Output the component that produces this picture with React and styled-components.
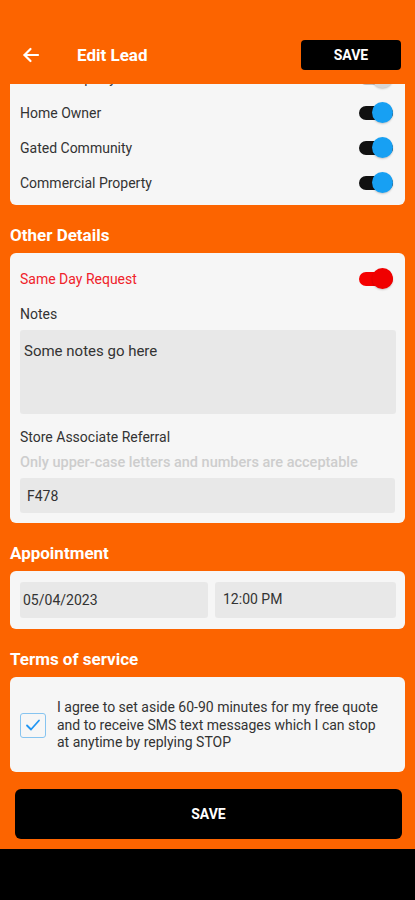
import React, {useRef, useLayoutEffect} from 'react';
import styled, {createGlobalStyle} from 'styled-components';

const GlobalStyle = createGlobalStyle`
  html, body {
    margin: 0;
    padding: 0;
    background: #000;
  }
  * {
    box-sizing: border-box;
  }
  body {
    font-family: Roboto, "Liberation Sans", Arial, sans-serif;
  }
`;

const Screen = styled.div`
  width: 415px;
  height: 900px;
  display: flex;
  flex-direction: column;
  background: #fc6400;
  overflow: hidden;
`;

const Header = styled.header`
  height: 84px;
  flex-shrink: 0;
  display: flex;
  align-items: center;
  padding: 25px 14px 0 20px;
  background: #fc6400;
`;

const BackButton = styled.button`
  width: 22px;
  height: 22px;
  padding: 0;
  border: none;
  background: none;
  display: flex;
  align-items: center;
  justify-content: center;
  cursor: pointer;
`;

const Title = styled.h1`
  margin: 0 0 0 35px;
  flex: 1;
  color: #fff;
  font-size: 17px;
  font-weight: 700;
`;

const SaveSmall = styled.button`
  width: 100px;
  height: 30px;
  border: none;
  border-radius: 4px;
  background: #000;
  color: #fff;
  font-family: Roboto, "Liberation Sans", sans-serif;
  font-size: 14px;
  font-weight: 700;
  cursor: pointer;
`;

const Scroll = styled.main`
  flex: 1;
  overflow: hidden;
  padding: 0 10px 10px;
`;

const Card = styled.section`
  background: #f6f6f6;
  border-radius: 6px;
  padding: ${p => p.$pad || '10px'};
  display: flex;
  flex-direction: column;
`;

const SectionTitle = styled.h2`
  margin: 20px 0 8px;
  height: 20px;
  line-height: 20px;
  color: #fff;
  font-size: 17px;
  font-weight: 700;
`;

const ToggleRow = styled.div`
  height: ${p => p.$h ?? 35}px;
  display: flex;
  align-items: center;
  justify-content: space-between;
  padding: 0 ${p => p.$right ?? 12}px 0 ${p => p.$left ?? 10}px;
`;

const RowLabel = styled.span`
  font-size: 14px;
  color: ${p => p.$color || '#333'};
`;

const Track = styled.span`
  position: relative;
  display: inline-block;
  width: 34px;
  height: 14px;
  border-radius: 7px;
  background: ${p => p.$track};
`;

const Thumb = styled.span`
  position: absolute;
  right: 0;
  top: -4px;
  width: 21px;
  height: 21px;
  border-radius: 50%;
  background: ${p => p.$thumb};
  box-shadow: 0 1px 2px rgba(0, 0, 0, 0.2);
`;

const FieldLabel = styled.div`
  margin-top: ${p => p.$mt || 0}px;
  line-height: 20px;
  font-size: 14px;
  color: #333;
`;

const Hint = styled.div`
  margin-top: 6px;
  line-height: 20px;
  font-size: 14.5px;
  font-weight: 500;
  color: #cdcdcd;
  white-space: nowrap;
`;

const TextArea = styled.div`
  margin-top: 6px;
  height: 84px;
  margin-right: -1px;
  border-radius: 3px;
  background: #e8e8e8;
  padding: 12px 4px;
  font-size: 15px;
  color: #333;
`;

const Input = styled.div`
  margin-top: ${p => p.$mt || 0}px;
  height: ${p => p.$h || 35}px;
  width: ${p => p.$w ? `${p.$w}px` : 'auto'};
  flex: ${p => p.$w ? 'none' : '1 1 auto'};
  border-radius: 3px;
  background: #e8e8e8;
  display: flex;
  align-items: ${p => p.$top ? 'flex-start' : 'center'};
  padding: ${p => p.$top ? '9px 0 0' : '0'};
  padding-left: ${p => p.$px ?? 7}px;
  font-size: 14px;
  color: #333;
`;

const InputRow = styled.div`
  display: flex;
  gap: 7px;
`;

const TermsRow = styled.label`
  display: flex;
  align-items: center;
  gap: 11px;
`;

const CheckBox = styled.span`
  flex-shrink: 0;
  width: 26px;
  height: 25px;
  border: 1.5px solid #86c4f0;
  border-radius: 3px;
  display: flex;
  align-items: center;
  justify-content: center;
`;

const TermsText = styled.p`
  margin: 0;
  font-size: 14px;
  line-height: 17.5px;
  color: #333;
`;

const SaveBig = styled.button`
  display: block;
  width: calc(100% - 8px);
  margin: 17px 4px 0 5px;
  height: 50px;
  border: none;
  border-radius: 6px;
  background: #000;
  color: #fff;
  font-family: Roboto, "Liberation Sans", sans-serif;
  font-size: 14px;
  font-weight: 700;
  cursor: pointer;
`;

const NavBar = styled.div`
  height: 51px;
  flex-shrink: 0;
  background: #000;
`;

const Switch = ({track, thumb}) => (
  <Track $track={track}>
    <Thumb $thumb={thumb} />
  </Track>
);

// first row sits mostly under the header (list is scrolled)
const propertyToggles = [
  {label: 'Rental Property', on: false},
  {label: 'Home Owner', on: true},
  {label: 'Gated Community', on: true},
  {label: 'Commercial Property', on: true},
];

export default function App() {
  const scrollRef = useRef(null);

  useLayoutEffect(() => {
    if (scrollRef.current) scrollRef.current.scrollTop = 32;
  }, []);

  return (
    <>
      <GlobalStyle />
      <Screen>
        <Header>
          <BackButton aria-label="Back">
            <svg width="18" height="18" viewBox="0 0 18 18" fill="none" stroke="#fff" strokeWidth="2.2" strokeLinecap="round" strokeLinejoin="round">
              <path d="M16 9H2.5" />
              <path d="M8.5 3L2.5 9l6 6" />
            </svg>
          </BackButton>
          <Title>Edit Lead</Title>
          <SaveSmall>SAVE</SaveSmall>
        </Header>

        <Scroll ref={scrollRef}>
          <Card $pad="7px 0 5px">
            {propertyToggles.map(t => (
              <ToggleRow key={t.label}>
                <RowLabel>{t.label}</RowLabel>
                <Switch track={t.on ? '#111' : '#bdbdbd'} thumb={t.on ? '#17a0f3' : '#d6d6d6'} />
              </ToggleRow>
            ))}
          </Card>

          <SectionTitle>Other Details</SectionTitle>
          <Card>
            <ToggleRow $h={32} $left={0} $right={2}>
              <RowLabel $color="#f0222a">Same Day Request</RowLabel>
              <Switch track="#f50000" thumb="#f00000" />
            </ToggleRow>
            <FieldLabel $mt={9}>Notes</FieldLabel>
            <TextArea>Some notes go here</TextArea>
            <FieldLabel $mt={13}>Store Associate Referral</FieldLabel>
            <Hint>Only upper-case letters and numbers are acceptable</Hint>
            <Input $mt={5}>F478</Input>
          </Card>

          <SectionTitle>Appointment</SectionTitle>
          <Card $pad="11px 9px 11px 10px">
            <InputRow>
              <Input $h={36} $w={188} $px={3}>05/04/2023</Input>
              <Input $h={36} $top $px={8}>12:00 PM</Input>
            </InputRow>
          </Card>

          <SectionTitle>Terms of service</SectionTitle>
          <Card $pad="22px 14px 20px 10px">
            <TermsRow>
              <CheckBox>
                <svg width="16" height="14" viewBox="0 0 16 14" fill="none" stroke="#2196f3" strokeWidth="1.8" strokeLinecap="round" strokeLinejoin="round">
                  <path d="M2 7.5l4 4 8-9" />
                </svg>
              </CheckBox>
              <TermsText>
                I agree to set aside 60-90 minutes for my free quote and to receive SMS text messages which I can stop at anytime by replying STOP
              </TermsText>
            </TermsRow>
          </Card>

          <SaveBig>SAVE</SaveBig>
        </Scroll>

        <NavBar />
      </Screen>
    </>
  );
}
